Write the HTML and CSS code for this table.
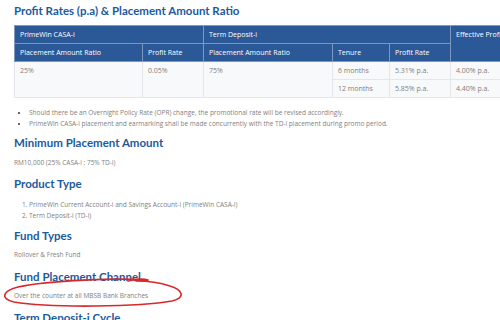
FILE: index.html
```html
<!DOCTYPE html>
<html>
<head>
<meta charset="utf-8">
<link rel="stylesheet" href="styles.css">
</head>
<body>
<div class="page">
  <h2 class="title">Profit Rates (p.a) &amp; Placement Amount Ratio</h2>
  <table class="rates">
    <colgroup>
      <col class="c1"><col class="c2"><col class="c3"><col class="c4"><col class="c5"><col class="c6">
    </colgroup>
    <thead>
      <tr>
        <th colspan="2">PrimeWin CASA-i</th>
        <th colspan="3">Term Deposit-i</th>
        <th rowspan="2" class="top">Effective Profit Rate</th>
      </tr>
      <tr>
        <th>Placement Amount Ratio</th>
        <th>Profit Rate</th>
        <th>Placement Amount Ratio</th>
        <th>Tenure</th>
        <th>Profit Rate</th>
      </tr>
    </thead>
    <tbody>
      <tr>
        <td rowspan="2" class="top">25%</td>
        <td rowspan="2" class="top">0.05%</td>
        <td rowspan="2" class="top">75%</td>
        <td>6 months</td>
        <td>5.31% p.a.</td>
        <td>4.00% p.a.</td>
      </tr>
      <tr>
        <td>12 months</td>
        <td>5.85% p.a.</td>
        <td>4.40% p.a.</td>
      </tr>
    </tbody>
  </table>
  <ul class="notes">
    <li>Should there be an Overnight Policy Rate (OPR) change, the promotional rate will be revised accordingly.</li>
    <li>PrimeWin CASA-i placement and earmarking shall be made concurrently with the TD-i placement during promo period.</li>
  </ul>
  <h2 class="heading">Minimum Placement Amount</h2>
  <p class="text">RM10,000 (25% CASA-i : 75% TD-i)</p>
  <h2 class="heading">Product Type</h2>
  <ol class="types">
    <li>PrimeWin Current Account-i and Savings Account-i (PrimeWin CASA-i)</li>
    <li>Term Deposit-i (TD-i)</li>
  </ol>
  <h2 class="heading">Fund Types</h2>
  <p class="text">Rollover &amp; Fresh Fund</p>
  <h2 class="heading">Fund Placement Channel</h2>
  <p class="text">Over the counter at all MBSB Bank Branches</p>
  <h2 class="heading">Term Deposit-i Cycle</h2>
</div>
<svg class="scribble" width="500" height="320" viewBox="0 0 500 320">
  <path d="M128 281 C 136 279, 142 278, 148 280 C 120 278, 50 280, 18 287 C 2 291, 0 299, 14 302 C 50 308, 140 307, 172 301 C 186 298, 183 290, 170 286 C 158 282, 145 281, 136 281" fill="none" stroke="#d8282c" stroke-width="1.7" stroke-linecap="round" stroke-linejoin="round"/>
</svg>
</body>
</html>
```

FILE: styles.css
```css
html, body {
  margin: 0;
  padding: 0;
  background: #ffffff;
  overflow: hidden;
  width: 500px;
  height: 320px;
}
body {
  font-family: "Open Sans", "Noto Sans", sans-serif;
  color: #808080;
  position: relative;
}
.page {
  padding: 3px 0 0 14px;
  width: 520px;
}
.title, .heading {
  font-family: Lato, "Open Sans", sans-serif;
  font-weight: 700;
  color: #1c5a9c;
  margin: 0;
  font-size: 11.5px;
  line-height: 16px;
}
.title {
  margin-bottom: 6px;
}
.heading {
  margin: 0 0 6.5px;
}
.rates {
  border-collapse: collapse;
  table-layout: fixed;
  width: 506px;
  font-size: 7px;
}
.rates .c1 { width: 128px; }
.rates .c2 { width: 61px; }
.rates .c3 { width: 129px; }
.rates .c4 { width: 57px; }
.rates .c5 { width: 61px; }
.rates .c6 { width: 70px; }
.rates th {
  background: #2b5896;
  color: #ffffff;
  font-weight: 400;
  text-align: left;
  padding: 0 5px;
  height: 17px;
  border: 1px solid #7d98bf;
  white-space: nowrap;
  overflow: hidden;
}
.rates td {
  background: #f8f9fa;
  padding: 0 5px;
  height: 17px;
  border: 1px solid #e3e6ea;
  white-space: nowrap;
}
.rates .top {
  vertical-align: top;
  padding-top: 4px;
}
.notes {
  margin: 8.5px 0 6.5px;
  padding-left: 15px;
  font-size: 6.5px;
  line-height: 11px;
}
.notes li::marker {
  color: #333333;
}
.text {
  font-size: 6.5px;
  line-height: 10px;
  margin: 0 0 8.5px;
}
.types {
  font-size: 6.5px;
  line-height: 11px;
  margin: 1px 0 7px;
  padding-left: 15px;
}
.scribble {
  position: absolute;
  left: 0;
  top: 0;
  pointer-events: none;
}
```
